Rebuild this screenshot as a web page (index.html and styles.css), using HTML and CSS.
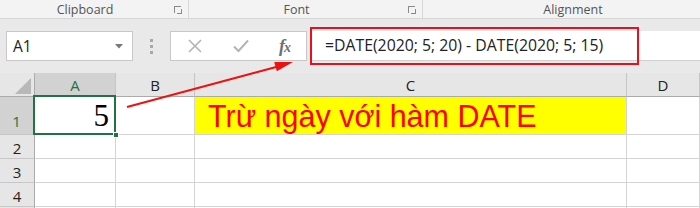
FILE: index.html
```html
<!DOCTYPE html>
<html>
<head>
<meta charset="utf-8">
<link rel="stylesheet" href="styles.css">
</head>
<body>
<div class="page">
  <div class="ribbon">
    <div class="group g1"><span class="glabel">Clipboard</span><span class="launcher"></span></div>
    <div class="group g2"><span class="glabel">Font</span><span class="launcher"></span></div>
    <div class="group g3"><span class="glabel">Alignment</span></div>
  </div>
  <div class="fbar">
    <div class="namebox"><span>A1</span><svg class="dd" width="8" height="5" viewBox="0 0 8 5"><path d="M0 0h8L4 4.5z" fill="#777"/></svg></div>
    <div class="grip"><i></i><i></i><i></i></div>
    <div class="fbtns">
      <svg width="14" height="14" viewBox="0 0 14 14"><path d="M1 1L13 13M13 1L1 13" stroke="#b4b4b4" stroke-width="1.6" fill="none"/></svg>
      <svg width="16" height="14" viewBox="0 0 16 14"><path d="M1 7.5L5.5 12L15 1.5" stroke="#b4b4b4" stroke-width="2" fill="none"/></svg>
      <span class="fx">f<i>x</i></span>
    </div>
    <div class="finput">=DATE(2020; 5; 20) - DATE(2020; 5; 15)</div>
    <div class="redbox"></div>
  </div>
  <div class="grid">
    <div class="corner"><svg width="16" height="16" viewBox="0 0 16 16"><path d="M16 0V16H0z" fill="#b8b8b8"/></svg></div>
    <div class="ch sel">A</div>
    <div class="ch">B</div>
    <div class="ch">C</div>
    <div class="ch">D</div>

    <div class="rh sel">1</div>
    <div class="cell a1">5<span class="selbox"></span><span class="handle"></span></div>
    <div class="cell"></div>
    <div class="cell c1">Trừ ngày với hàm DATE</div>
    <div class="cell"></div>

    <div class="rh">2</div><div class="cell"></div><div class="cell"></div><div class="cell"></div><div class="cell"></div>
    <div class="rh">3</div><div class="cell"></div><div class="cell"></div><div class="cell"></div><div class="cell"></div>
    <div class="rh">4</div><div class="cell"></div><div class="cell"></div><div class="cell"></div><div class="cell"></div>
    <div class="rh"></div><div class="cell"></div><div class="cell"></div><div class="cell"></div><div class="cell"></div>
  </div>
  <svg class="arrow" width="700" height="208" viewBox="0 0 700 208">
    <line x1="127" y1="107" x2="278" y2="66.5" stroke="#ee1111" stroke-width="2"/>
    <path d="M293 62L276.8 71.3L274.2 62.1z" fill="#ee1111"/>
  </svg>
</div>
</body>
</html>
```
FILE: styles.css
```css
* { box-sizing: border-box; }
html, body { margin: 0; padding: 0; }
body { width: 700px; height: 208px; overflow: hidden; background: #fff; font-family: "Open Sans", "Noto Sans", sans-serif; }
.page { position: relative; width: 700px; height: 208px; overflow: hidden; }

.ribbon { display: flex; height: 19px; background: #f3f3f3; border-bottom: 1px solid #d6d6d6; }
.group { display: flex; align-items: center; height: 18px; border-right: 1px solid #d8d8d8; flex: none; }
.g1 { width: 189px; }
.g2 { width: 234px; }
.g3 { width: 300px; border-right: none; }
.glabel { flex: 1; text-align: center; font-size: 12.5px; color: #555; line-height: 18px; padding-top: 1px; }
.launcher { width: 7px; height: 7px; border-left: 1px solid #8a8a8a; border-top: 1px solid #8a8a8a; margin-right: 7px; margin-left: 4px; position: relative; }
.launcher::after { content: ""; position: absolute; left: 2px; top: 2px; width: 4px; height: 4px; border-right: 1px solid #8a8a8a; border-bottom: 1px solid #8a8a8a; }

.fbar { position: relative; display: flex; align-items: flex-start; height: 54px; background: #e9e9e9; padding-top: 12px; }
.namebox { margin-left: 6px; width: 127px; height: 30px; background: #fff; border: 1px solid #c8c8c8; display: flex; align-items: center; justify-content: space-between; padding: 0 9px 0 6px; font-size: 15.5px; color: #222; }
.grip { width: 37px; height: 30px; display: flex; flex-direction: column; align-items: center; justify-content: center; gap: 3px; }
.grip i { display: block; width: 3px; height: 3px; background: #a8a8a8; }
.fbtns { width: 137px; height: 30px; background: #fff; border: 1px solid #c8c8c8; display: flex; align-items: center; justify-content: space-between; padding: 0 16px 0 17px; }
.fx { font-family: "Liberation Serif", "DejaVu Serif", serif; font-style: italic; font-weight: bold; font-size: 18px; color: #707070; letter-spacing: -1px; }
.fx i { font-size: 14px; }
.finput { margin-left: 3px; flex: 1; height: 30px; background: #fff; border-bottom: 1px solid #d0d0d0; font-size: 15.8px; color: #222; line-height: 28px; padding-left: 15px; white-space: nowrap; }
.redbox { position: absolute; left: 310px; top: 8px; width: 329px; height: 38px; border: 2px solid #e8101a; }

.grid { display: grid; grid-template-columns: 35px 81px 79px 432px 73px; grid-template-rows: 24px 38px 24px 24px 24px 24px; background: #fff; }
.corner { background: #e6e6e6; border-right: 1px solid #ababab; border-bottom: 1px solid #ababab; display: flex; align-items: flex-end; justify-content: flex-end; padding: 0 3px 2px 0; }
.ch { background: #e6e6e6; border-right: 1px solid #c6c6c6; border-bottom: 1px solid #ababab; text-align: center; font-size: 15px; color: #222; line-height: 24px; }
.ch.sel { background: #d2d2d2; color: #217346; border-bottom: 2px solid #217346; }
.rh { background: #e6e6e6; border-right: 1px solid #ababab; border-bottom: 1px solid #c6c6c6; text-align: center; font-size: 15px; color: #222; display: flex; align-items: flex-end; justify-content: center; padding-bottom: 0; }
.rh.sel { background: #d2d2d2; color: #217346; border-right: 2px solid #217346; padding-bottom: 3px; }
.cell { border-right: 1px solid #d4d4d4; border-bottom: 1px solid #d4d4d4; }
.a1 { position: relative; font-family: "Liberation Serif", "DejaVu Serif", "Times New Roman", serif; font-size: 31px; color: #000; text-align: right; padding-right: 6px; line-height: 38px; }
.selbox { position: absolute; left: -2px; top: -2px; right: -1px; bottom: -1px; border: 2px solid #217346; }
.handle { position: absolute; right: -4px; bottom: -4px; width: 6px; height: 6px; background: #217346; border: 1px solid #fff; }
.c1 { background: #ffff00; color: #ff0000; font-family: "Liberation Sans", Arial, sans-serif; font-size: 30.5px; line-height: 38px; padding-left: 13px; white-space: nowrap; }

.arrow { position: absolute; left: 0; top: 0; pointer-events: none; }
```
